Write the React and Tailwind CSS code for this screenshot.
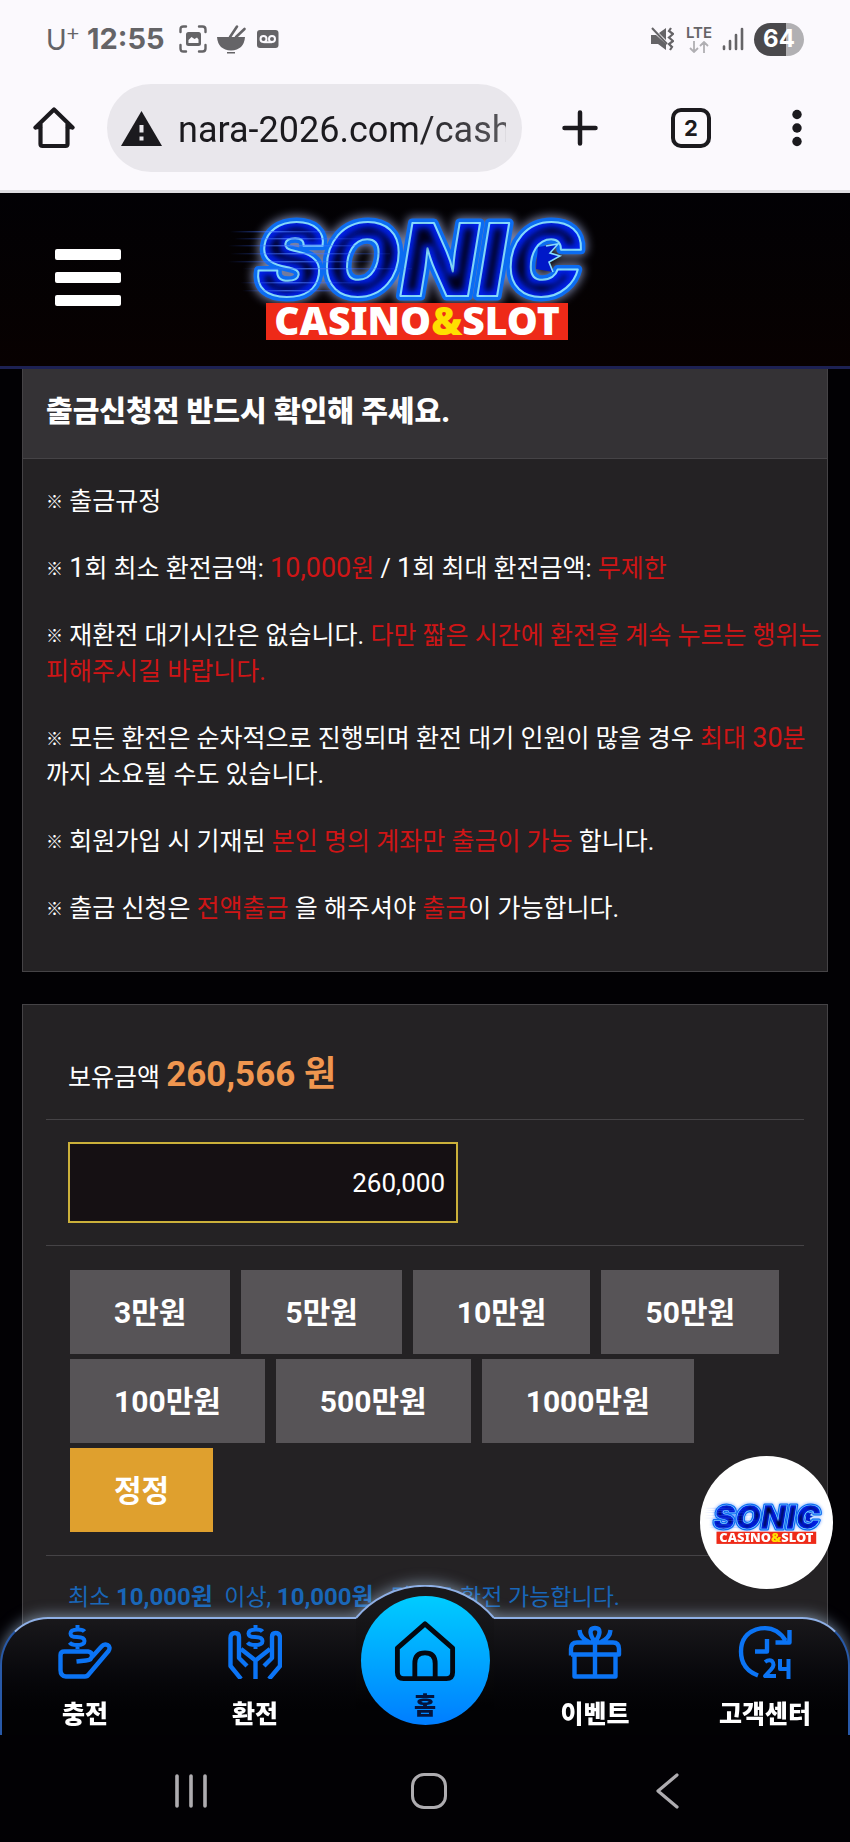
import { useState } from "react";

const amounts = ["3만원", "5만원", "10만원", "50만원", "100만원", "500만원", "1000만원"];

function Logo({ id, className, glow = "#b8c8ff" }) {
  const ref = (name) => `url(#${id}-${name})`;
  const word = `#${id}-word`;
  return (
    <svg viewBox="0 0 430 150" className={className} role="img" aria-label="SONIC CASINO&SLOT">
      <defs>
        <text id={`${id}-word`} x="46" y="95" className="font-['Inter',sans-serif] text-[100px] font-black italic">
          SONIC
        </text>
        <filter id={`${id}-halo`} x="-20%" y="-40%" width="140%" height="180%">
          <feGaussianBlur stdDeviation="5" />
        </filter>
        <filter id={`${id}-core`} x="-10%" y="-10%" width="120%" height="120%">
          <feMorphology operator="erode" radius="5" />
          <feGaussianBlur stdDeviation="3" />
        </filter>
        <linearGradient id={`${id}-speed`} x1="0" x2="1">
          <stop offset="0" stopColor="#2b5cff" stopOpacity="0" />
          <stop offset="0.4" stopColor="#4d7dff" stopOpacity="0.7" />
          <stop offset="1" stopColor="#2b5cff" stopOpacity="0.1" />
        </linearGradient>
      </defs>
      <use href={word} fill={glow} stroke={glow} strokeWidth="12" strokeLinejoin="round" opacity="0.65" filter={ref("halo")} />
      <use href={word} fill="#0b6cf2" stroke="#0b6cf2" strokeWidth="9" strokeLinejoin="round" />
      <use href={word} fill="#0020ee" stroke="#86dcff" strokeWidth="2" strokeLinejoin="round" />
      <path d="M328 46L348 43L340 52L350 55L339 61L343 71L326 68Z" fill="#0018c8" />
      <path d="M336 45L348 43L340 52L350 55L339 61L343 71" fill="none" stroke="#86dcff" strokeWidth="1.600" />
      <use href={word} fill="#00001c" filter={ref("core")} />
      <g fill={ref("speed")}>
        <rect x="20" y="30" width="110" height="1.4" />
        <rect x="24" y="37" width="130" height="1.4" />
        <rect x="18" y="44" width="150" height="1.4" />
        <rect x="20" y="52" width="160" height="1.4" />
        <rect x="18" y="60" width="150" height="1.4" />
        <rect x="32" y="67" width="170" height="1.4" />
        <rect x="30" y="81" width="120" height="1.4" />
        <rect x="32" y="89" width="110" height="1.4" />
      </g>
      <rect x="56" y="102" width="302" height="37" fill="#ee2a18" />
      <text
        x="207"
        y="134"
        textAnchor="middle"
        fill="#fff"
        className="font-['Noto_Sans',sans-serif] text-[39px] font-black"
      >
        CASINO<tspan fill="#ffe000">&amp;</tspan>SLOT
      </text>
    </svg>
  );
}

function StatusBar() {
  return (
    <div className="flex h-[78px] items-center justify-between px-[46px] text-[#656467]">
      <div className="flex items-center">
        <span className="flex w-[41px] items-start font-['Lato',sans-serif] text-[28px] leading-8">
          U<sup className="top-0 text-[22px] leading-5">+</sup>
        </span>
        <time className="font-['Inter',sans-serif] text-[29px] leading-8 font-bold">12:55</time>
        <svg width="100" height="30" viewBox="0 0 100 30" fill="none" className="ml-3.5">
          <g stroke="#656467" strokeWidth="2.4" strokeLinecap="round">
            <path d="M1.5 8V5.500Q1.500 2.500 4.500 2.500H7M20 2.500H23.500Q26.500 2.500 26.500 5.500V8M26.500 21V24.500Q26.500 27.500 23.500 27.500H20M7 27.500H4.500Q1.500 27.500 1.500 24.500V21" />
          </g>
          <rect x="7" y="8" width="15" height="14" rx="2.500" fill="#656467" />
          <path d="M9.500 19v-3l3-3 3 2 2.500-1.500 1.500 2V19z" fill="#fbf9fd" />
          <path d="M38 13H66Q65 26 52 26.500Q39 26 38 13ZM48 28H56V29.500H48Z" fill="#656467" />
          <path d="M51 13L58 2.500M57 13L65.500 5" stroke="#656467" strokeWidth="2.600" strokeLinecap="round" />
          <rect x="78" y="6" width="21.500" height="18" rx="3" fill="#656467" />
          <g stroke="#fbf9fd" strokeWidth="2">
            <circle cx="84.500" cy="15" r="3" />
            <circle cx="93" cy="15" r="3" />
            <path d="M84.500 18.200H93" />
          </g>
        </svg>
      </div>
      <div className="flex items-center">
        <svg width="24" height="26" viewBox="0 0 24 26" fill="none">
          <path d="M9 7L16 2V14ZM1 9H6L16 18V24L8 18H1Z" fill="#656467" />
          <path d="M2 2L17 18" stroke="#656467" strokeWidth="2" />
          <path d="M21 2L19 5L23 8L19 11.500L23 15L19 18L22 21L20 24" stroke="#656467" strokeWidth="2.200" />
        </svg>
        <div className="ml-3 flex flex-col items-center">
          <span className="font-['Inter',sans-serif] text-[15px] leading-4 font-semibold">LTE</span>
          <svg width="20" height="12" viewBox="0 0 20 12" fill="none" stroke="#b0afb3" strokeWidth="1.800">
            <path d="M5 0V11M1 7L5 11L9 7M15 12V1M11 5L15 1L19 5" />
          </svg>
        </div>
        <svg width="22" height="24" viewBox="0 0 22 24" stroke="#656467" strokeWidth="2.600" strokeLinecap="round" className="ml-2.5">
          <path d="M2 19.500V22M8 14V22M14 8V22" />
          <path d="M20 2V22" />
        </svg>
        <span className="ml-2.5 flex h-[33px] w-[50px] items-center justify-center rounded-full bg-[linear-gradient(90deg,#4a494c_64%,#b1b0b3_64%)] font-['Inter',sans-serif] text-[24px] font-bold text-white">
          64
        </span>
      </div>
    </div>
  );
}

function BrowserBar() {
  return (
    <div className="flex h-[112px] items-center pb-3 text-[#1b1a1e]">
      <button type="button" aria-label="Home" className="flex w-[107px] justify-center">
        <svg width="42" height="42" viewBox="0 0 42 42" fill="none" stroke="currentColor" strokeWidth="4.200" strokeLinejoin="round" strokeLinecap="round">
          <path d="M2.500 20.500L21 2.500L39.500 20.500M7.500 17V37Q7.500 39 9.500 39H32.500Q34.500 39 34.500 37V17" />
          <path d="M2.500 20.500H7.500M34.500 20.500H39.500" strokeWidth="3.500" />
        </svg>
      </button>
      <div className="flex h-22 min-w-0 flex-1 items-center rounded-full bg-[#e9e7ec] pr-4 pl-3.5">
        <svg width="41" height="35" viewBox="0 0 41 35" className="shrink-0">
          <path d="M20.500 0L41 35H0Z" fill="#1b1a1e" />
          <path d="M18.500 14H22.500V21.500H18.500ZM18.500 25.500H22.500V29.500H18.500Z" fill="#e9e7ec" />
        </svg>
        <input
          aria-label="Address"
          readOnly
          value="nara-2026.com/cash"
          className="ml-4 min-w-0 flex-1 bg-transparent pt-1 text-[36px] outline-none [mask-image:linear-gradient(90deg,#000_70%,rgba(0,0,0,0.7))]"
        />
      </div>
      <button type="button" aria-label="New tab" className="flex w-[116px] justify-center">
        <svg width="36" height="36" viewBox="0 0 36 36" stroke="currentColor" strokeWidth="4.500" strokeLinecap="round">
          <path d="M18 2.500V33.500M2.500 18H33.500" />
        </svg>
      </button>
      <button type="button" aria-label="Tabs" className="flex w-[106px] justify-center">
        <span className="flex size-10 items-center justify-center rounded-[10px] border-4 border-current font-['Inter',sans-serif] text-[22px] font-bold">
          2
        </span>
      </button>
      <button type="button" aria-label="More" className="flex w-[106px] justify-center">
        <svg width="10" height="38" viewBox="0 0 10 38" fill="currentColor">
          <circle cx="5" cy="5.500" r="4.700" />
          <circle cx="5" cy="19" r="4.700" />
          <circle cx="5" cy="32.500" r="4.700" />
        </svg>
      </button>
    </div>
  );
}

function Red({ children }) {
  return <span className="text-[#cf1516]">{children}</span>;
}

function Num({ children }) {
  return <span className="text-[27px] leading-none">{children}</span>;
}

function Rule({ children }) {
  return (
    <p>
      <span className="align-[2px] text-[17px] leading-none font-bold">※</span> {children}
    </p>
  );
}

function Notice() {
  return (
    <section className="border border-t-0 border-[#454346] bg-[#242224]">
      <h1 className="flex h-[90px] items-center border-b border-[#454346] bg-[#343235] px-[23px] pb-0.5 text-[29px] font-black">
        출금신청전 반드시 확인해 주세요.
      </h1>
      <div className="flex flex-col gap-[31px] pt-[25px] pr-1 pb-11 pl-[23px] text-[25px] leading-9">
        <Rule>출금규정</Rule>
        <Rule>
          <Num>1</Num>회 최소 환전금액:{" "}
          <Red>
            <Num>10,000</Num>원
          </Red>{" "}
          / <Num>1</Num>회 최대 환전금액: <Red>무제한</Red>
        </Rule>
        <Rule>
          재환전 대기시간은 없습니다. <Red>다만 짧은 시간에 환전을 계속 누르는 행위는 피해주시길 바랍니다.</Red>
        </Rule>
        <Rule>
          모든 환전은 순차적으로 진행되며 환전 대기 인원이 많을 경우{" "}
          <Red>
            최대 <Num>30</Num>분
          </Red>
          까지 소요될 수도 있습니다.
        </Rule>
        <Rule>
          회원가입 시 기재된 <Red>본인 명의 계좌만 출금이 가능</Red> 합니다.
        </Rule>
        <Rule>
          출금 신청은 <Red>전액출금</Red> 을 해주셔야 <Red>출금</Red>이 가능합니다.
        </Rule>
      </div>
    </section>
  );
}

function WithdrawForm() {
  const [amount, setAmount] = useState("260,000");
  return (
    <form className="flex-1 border border-[#454346] bg-[#242224] px-[23px] pt-8">
      <div className="flex h-[83px] items-center border-b border-[#454346] px-[22px] pb-1.5">
        <label htmlFor="amount" className="text-[25px]">
          보유금액 <strong className="text-[35px] font-bold text-[#f0964f]">260,566 원</strong>
        </label>
      </div>
      <div className="border-b border-[#454346] px-[22px] py-[22px]">
        <input
          id="amount"
          value={amount}
          onChange={(e) => setAmount(e.target.value)}
          className="block h-[81px] w-[390px] border-2 border-[#cbb03a] bg-[#151013] px-[11px] text-right text-[26px] outline-none"
        />
      </div>
      <div className="flex flex-wrap gap-x-[11px] gap-y-[5px] border-b border-[#454346] px-6 pt-6 pb-[23px] text-[30px] font-bold">
        {amounts.map((a) => (
          <button key={a} type="button" onClick={() => setAmount(a)} className="h-[84px] bg-[#575457] px-11">
            {a}
          </button>
        ))}
        <button type="button" onClick={() => setAmount("")} className="h-[84px] bg-[#dfa02e] px-11">
          정정
        </button>
      </div>
      <p className="px-[22px] pt-[23px] text-[23px] leading-9 whitespace-pre-wrap text-[#1866b8]">
        최소 <b className="text-[24px] font-bold">10,000원</b>
        {"  "}이상, <b className="text-[24px] font-bold">10,000원</b>
        {"   "}단위로 환전 가능합니다.
      </p>
    </form>
  );
}

const iconProps = {
  width: 54,
  height: 54,
  viewBox: "0 0 54 54",
  fill: "none",
  stroke: "#0b74f5",
  strokeWidth: 4.4,
  strokeLinejoin: "round",
};

const dollar = "M26.500 6.500Q25 4.500 20 4.500Q12.500 4.500 12.500 8.500Q12.500 12 19 12Q26.500 12 26.500 16Q26.500 20 19 20Q13.500 20 11.500 17.500M19.500 0V4.500M19.500 20V24";

function ChargeIcon() {
  return (
    <svg {...iconProps}>
      <path d={dollar} strokeWidth="4" />
      <path d="M34 32L43.500 21.500Q46 18.500 49.500 20Q53 22 50.500 26L31 49Q29.500 51.500 27 51.500H8Q2.500 51 2.500 45V30Q2.500 26.500 6.500 26.500H30Q34 27 34 30.500Q34 35 28 35.500L18.500 36.500" />
    </svg>
  );
}

function WithdrawIcon() {
  return (
    <svg {...iconProps}>
      <path d={dollar} strokeWidth="4" transform="translate(8 0)" />
      <path d="M27.500 54V35.500L13 24M11 28V12Q11 8 7 8Q2.500 8 2.500 13V41L13 54M11 23V33L19 41M27.500 35.500L42 24M44 28V12Q44 8 47.500 8Q52 8 52 13V41L41 54M44 23V33L36 41" />
    </svg>
  );
}

function HomeIcon() {
  return (
    <svg width="62" height="62" viewBox="0 0 64 64" fill="none" stroke="#040810" strokeWidth="5" strokeLinejoin="round">
      <path d="M3.500 29L32 4L60.500 29V54Q60.500 60.500 54 60.500H10Q3.500 60.500 3.500 54ZM21.500 60.500V45Q21.500 34 32 34Q42.500 34 42.500 45V60.500" />
    </svg>
  );
}

function EventIcon() {
  return (
    <svg {...iconProps}>
      <path d="M6.500 31V51.500H47.500V31M3 30.500V24Q3 17.500 9 17.500H45Q51 17.500 51 24V29.500H3M27 17V52M27 17Q22.500 11 22.500 7Q22.500 3 27 3Q31.500 3 31.500 7Q31.500 11 27 17ZM21 17Q12 13 11.500 5M33 17Q42 13 42.500 5" />
    </svg>
  );
}

function SupportIcon() {
  return (
    <svg {...iconProps}>
      <path d="M20 50.500Q3 44 3 26.500Q3 10 18 4.500Q37 -1 47.500 15.500M51.500 5V17.500H37.500M29 14V26.500H17" />
      <path d="M27 37Q31 34 34 36Q37.500 40 33 44.500L27 51H38M42 34V44H52M50.500 34V54" strokeWidth="4" />
    </svg>
  );
}

const tabs = [
  { label: "충전", Icon: ChargeIcon },
  { label: "환전", Icon: WithdrawIcon },
  { label: "홈", Icon: HomeIcon, active: true },
  { label: "이벤트", Icon: EventIcon },
  { label: "고객센터", Icon: SupportIcon },
];

function TabBackdrop() {
  return (
    <div aria-hidden="true" className="absolute inset-0 flex drop-shadow-[0_-2px_7px_rgba(190,222,255,0.5)]">
      <div className="mt-8 flex-1 rounded-tl-[48px] border-t-2 border-l-2 border-t-[#8fb0e6] border-l-[#2859a8] bg-linear-to-b from-[#19181b] to-[#020204] to-80%" />
      <svg width="138" height="150" viewBox="0 0 138 150" className="shrink-0">
        <defs>
          <linearGradient id="bump" x1="0" x2="0" y1="0" y2="1">
            <stop offset="0.15" stopColor="#19181b" />
            <stop offset="0.8" stopColor="#020204" />
          </linearGradient>
        </defs>
        <path d="M0 33A90 90 0 0 1 138 33V150H0Z" fill="url(#bump)" />
        <path d="M0 33A90 90 0 0 1 138 33" fill="none" stroke="#8fb0e6" strokeWidth="2" />
      </svg>
      <div className="mt-8 flex-1 rounded-tr-[48px] border-t-2 border-r-2 border-t-[#8fb0e6] border-r-[#2859a8] bg-linear-to-b from-[#19181b] to-[#020204] to-80%" />
    </div>
  );
}

function TabBar() {
  return (
    <nav className="relative h-[150px]">
      <TabBackdrop />
      <ul className="relative grid h-full grid-cols-5 pt-[11px] text-[25px] leading-9 font-black">
        {tabs.map(({ label, Icon, active }) => (
          <li key={label} className="flex justify-center">
            {active ? (
              <a
                href="#home"
                className="flex size-[129px] flex-col items-center gap-1.5 rounded-full bg-linear-to-b from-[#00ccff] to-[#007dff] pt-6 text-[24px] leading-9 text-[#04143c]"
              >
                <Icon />
                <span>{label}</span>
              </a>
            ) : (
              <a href="#menu" className="flex flex-col items-center gap-[18px] pt-[29px] whitespace-nowrap">
                <Icon />
                <span>{label}</span>
              </a>
            )}
          </li>
        ))}
      </ul>
    </nav>
  );
}

function SystemNav() {
  return (
    <div className="relative grid h-[107px] grid-cols-3 items-center bg-[#020104] pt-1 pr-16 pl-18 text-[#aeacb0]">
      <button type="button" aria-label="Recent apps" className="flex justify-center">
        <svg width="34" height="36" viewBox="0 0 34 36" stroke="currentColor" strokeWidth="3.600" strokeLinecap="round">
          <path d="M3 3V33M17 3V33M31 3V33" />
        </svg>
      </button>
      <button type="button" aria-label="Home screen" className="flex justify-center">
        <span className="size-9 rounded-[13px] border-3 border-current" />
      </button>
      <button type="button" aria-label="Back" className="flex justify-center">
        <svg width="24" height="36" viewBox="0 0 24 36" fill="none" stroke="currentColor" strokeWidth="3.200" strokeLinecap="round" strokeLinejoin="round">
          <path d="M22 2L3 18L22 34" />
        </svg>
      </button>
    </div>
  );
}

export default function App() {
  return (
    <div
      lang="ko"
      className="flex min-h-screen flex-col bg-[#020104] font-['Roboto','Noto_Sans_CJK_KR',sans-serif] text-white"
    >
      <div className="border-b-3 border-[#dddce1] bg-[#fbf9fd]">
        <StatusBar />
        <BrowserBar />
      </div>
      <header className="grid h-[176px] grid-cols-[1fr_auto_1fr] items-center border-b-3 border-[#1d2153] bg-linear-to-b from-[#020104] to-[#080101] pb-2">
        <button type="button" aria-label="메뉴" className="ml-[55px] flex w-[66px] flex-col gap-3 pt-1">
          <span className="h-[11px] rounded-xs bg-white" />
          <span className="h-[11px] rounded-xs bg-white" />
          <span className="h-[11px] rounded-xs bg-white" />
        </button>
        <Logo id="brand" className="w-[430px]" />
      </header>
      <main className="flex flex-1 flex-col gap-8 px-[22px]">
        <Notice />
        <WithdrawForm />
      </main>
      <a
        href="#chat"
        className="fixed right-[17px] bottom-[253px] flex size-[133px] items-center justify-center rounded-full bg-white"
      >
        <Logo id="chat" glow="#5f95ff" className="ml-1 w-[142px] shrink-0" />
      </a>
      <footer className="fixed inset-x-0 bottom-0">
        <TabBar />
        <SystemNav />
      </footer>
    </div>
  );
}
